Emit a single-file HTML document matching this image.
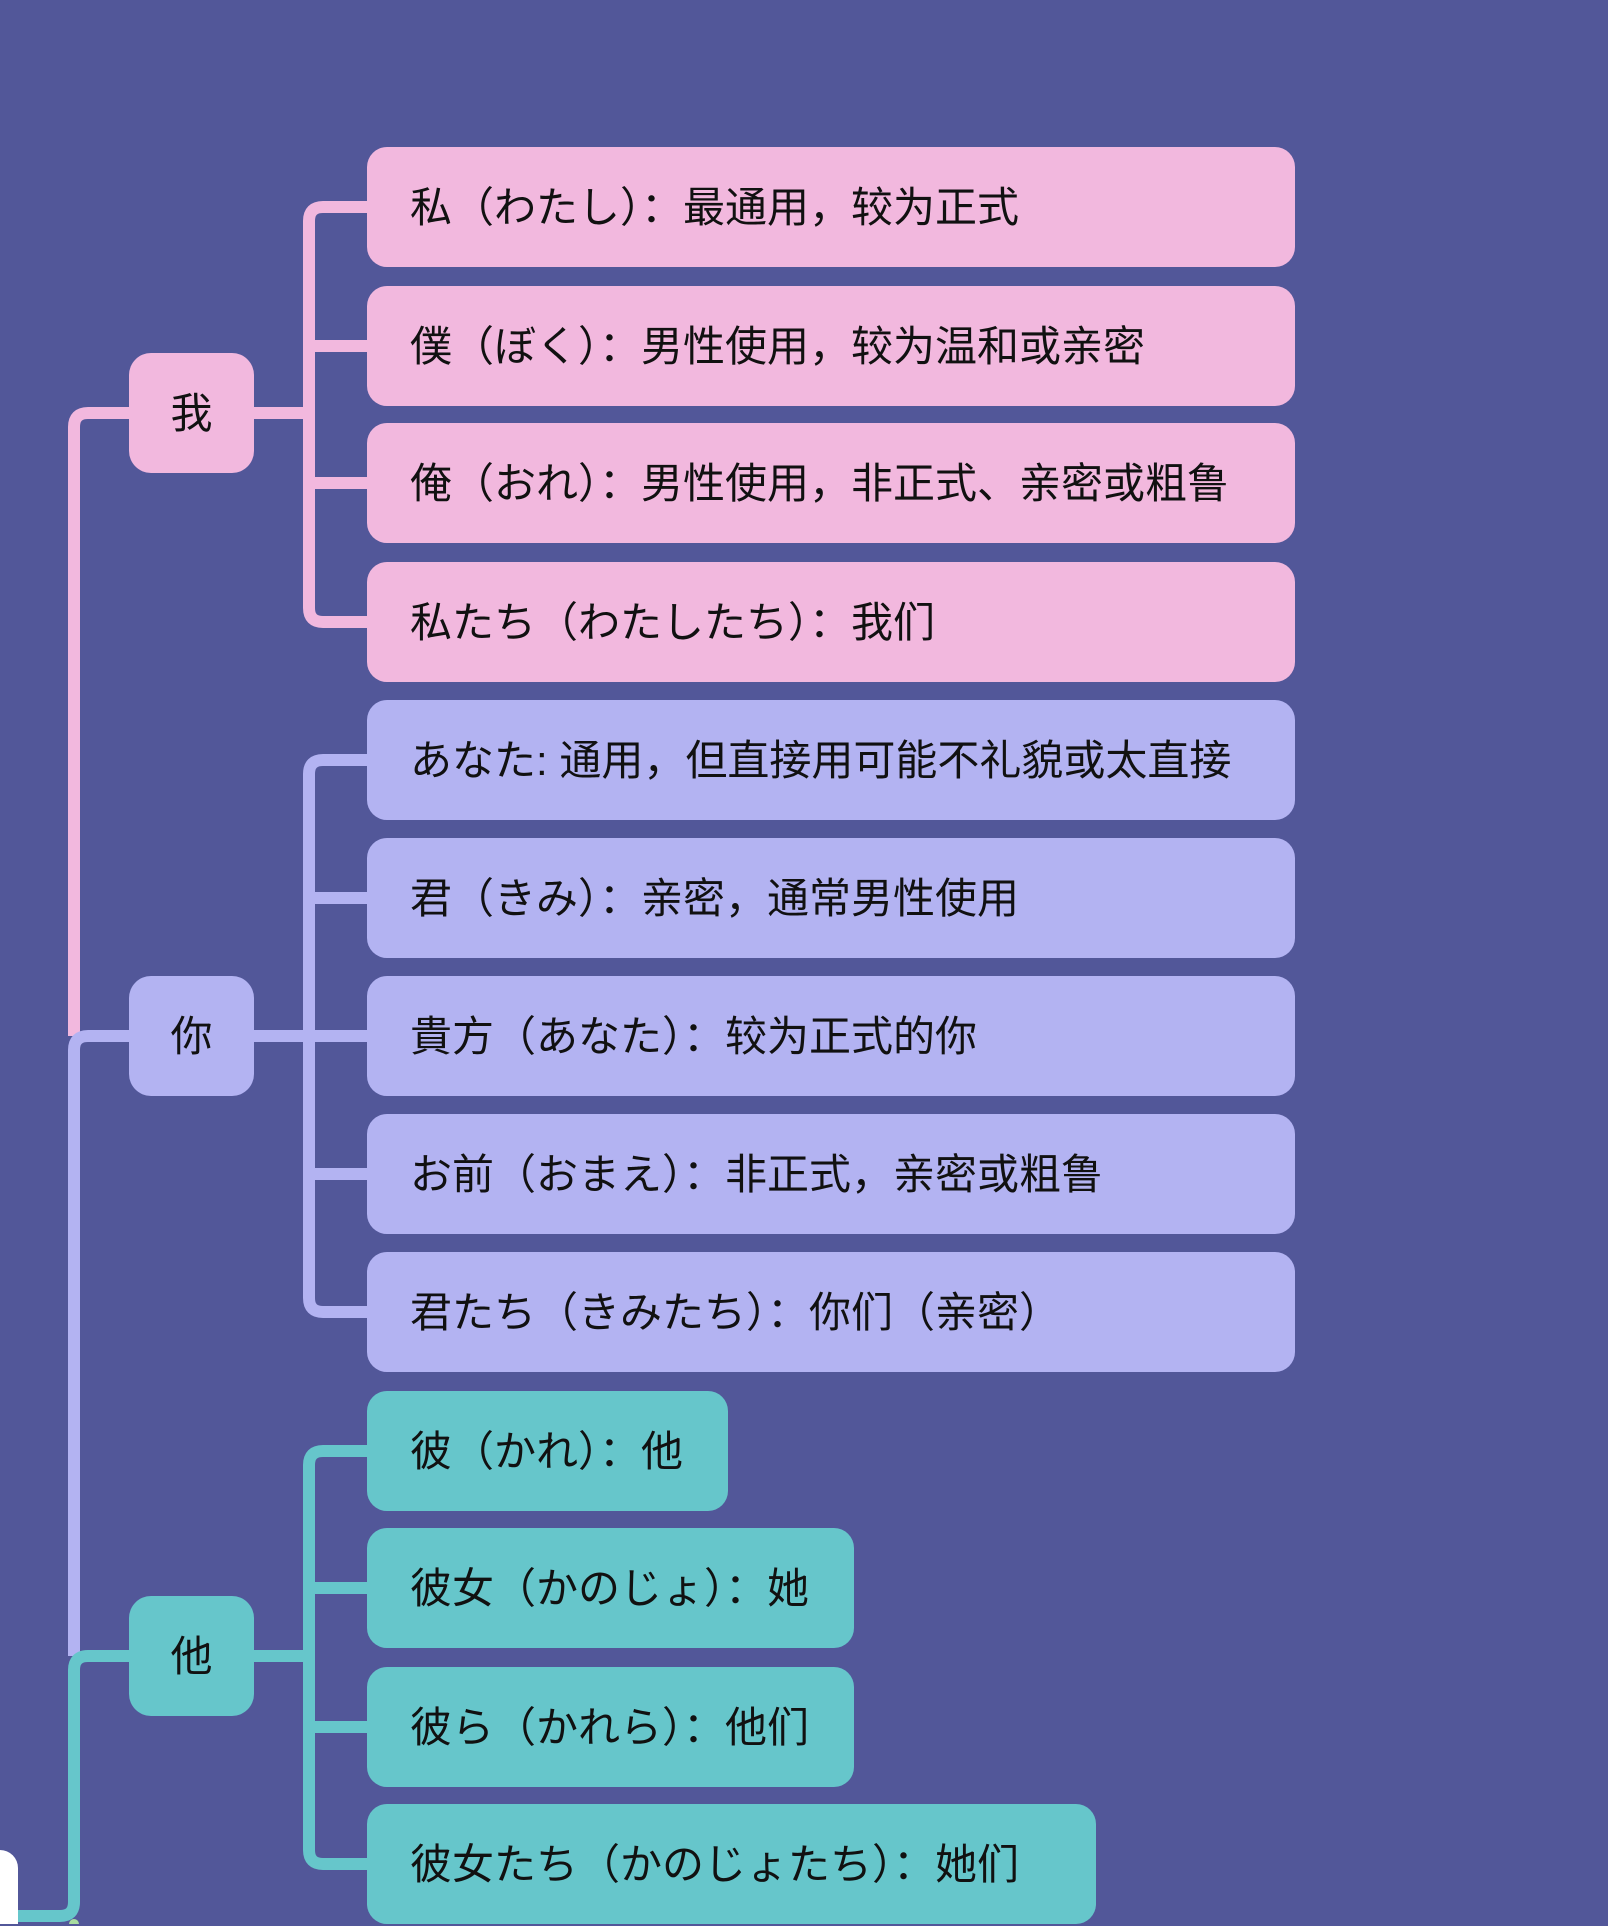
<!DOCTYPE html>
<html><head><meta charset="utf-8"><style>
html,body{margin:0;padding:0}
body{width:1608px;height:1924px;background:#525799;position:relative;overflow:hidden;font-family:"Liberation Sans","Noto Sans CJK SC",sans-serif;}
.n{position:absolute;border-radius:20px;height:120px;line-height:122px;font-size:42px;color:#111;box-sizing:border-box;white-space:nowrap}
.l{left:367px;padding-left:43px}
.m{left:129px;width:125px;text-align:center;border-radius:22px}
.p{background:#f2b8de}.v{background:#b3b3f2}.t{background:#66c6cb}
svg{position:absolute;left:0;top:0}
</style></head><body>
<svg width="1608" height="1924" fill="none" stroke-width="12">
<g stroke="#f2b8de">
<path d="M367,207 H323 Q309,207 309,221 V608 Q309,622 323,622 H367"/>
<path d="M309,346 H367 M309,483 H367 M254,413 H309"/>
<path d="M129,413 H88 Q74,413 74,427 V1036"/>
</g>
<g stroke="#b3b3f2">
<path d="M367,760 H323 Q309,760 309,774 V1298 Q309,1312 323,1312 H367"/>
<path d="M309,898 H367 M309,1036 H367 M309,1174 H367 M254,1036 H309"/>
<path d="M129,1036 H88 Q74,1036 74,1050 V1656"/>
</g>
<g stroke="#66c6cb">
<path d="M367,1451 H323 Q309,1451 309,1465 V1850 Q309,1864 323,1864 H367"/>
<path d="M309,1588 H367 M309,1727 H367 M254,1656 H309"/>
<path d="M129,1656 H88 Q74,1656 74,1670 V1902 Q74,1916 60,1916 H0"/>
</g>
<circle cx="74" cy="1924" r="5" fill="#a8dca0"/>
<rect x="-20" y="1850" width="38" height="100" rx="18" fill="#fff"/>
</svg>
<div class="n m p" style="top:353px">我</div>
<div class="n m v" style="top:976px">你</div>
<div class="n m t" style="top:1596px">他</div>

<div class="n l p" style="top:147px;width:928px">私（わたし）：最通用，较为正式</div>
<div class="n l p" style="top:286px;width:928px">僕（ぼく）：男性使用，较为温和或亲密</div>
<div class="n l p" style="top:423px;width:928px">俺（おれ）：男性使用，非正式、亲密或粗鲁</div>
<div class="n l p" style="top:562px;width:928px">私たち（わたしたち）：我们</div>

<div class="n l v" style="top:700px;width:928px">あなた: 通用，但直接用可能不礼貌或太直接</div>
<div class="n l v" style="top:838px;width:928px">君（きみ）：亲密，通常男性使用</div>
<div class="n l v" style="top:976px;width:928px">貴方（あなた）：较为正式的你</div>
<div class="n l v" style="top:1114px;width:928px">お前（おまえ）：非正式，亲密或粗鲁</div>
<div class="n l v" style="top:1252px;width:928px">君たち（きみたち）：你们（亲密）</div>

<div class="n l t" style="top:1391px;width:361px">彼（かれ）：他</div>
<div class="n l t" style="top:1528px;width:487px">彼女（かのじょ）：她</div>
<div class="n l t" style="top:1667px;width:487px">彼ら（かれら）：他们</div>
<div class="n l t" style="top:1804px;width:729px">彼女たち（かのじょたち）：她们</div>
</body></html>
